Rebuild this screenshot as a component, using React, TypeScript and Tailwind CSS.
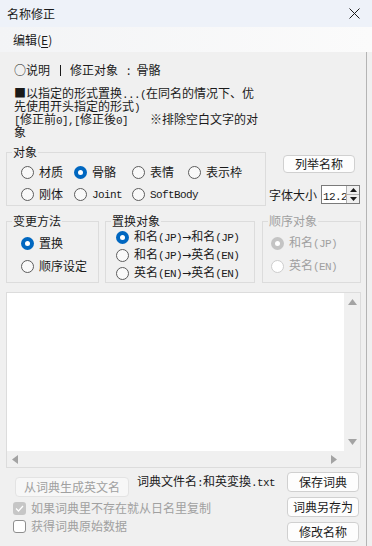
import type { ReactNode } from "react";

function M({ children }: { children: ReactNode }) {
  return <span className="font-['Liberation_Mono','Noto_Sans_CJK_SC',monospace] text-[11px] tracking-[-0.6px]">{children}</span>;
}

// arrow between names, Liberation Mono draws it too short
function To() {
  return <span className="font-['DejaVu_Sans',sans-serif] text-[11px]">→</span>;
}

function Radio({ checked, disabled }: { checked?: boolean; disabled?: boolean }) {
  if (checked) {
    return (
      <span
        className={`flex h-[13px] w-[13px] shrink-0 items-center justify-center rounded-full ${
          disabled ? "bg-[#c4c4c4]" : "bg-[#0067c0]"
        }`}
      >
        <span className="h-[5px] w-[5px] rounded-full bg-white" />
      </span>
    );
  }
  return (
    <span
      className={`h-[13px] w-[13px] shrink-0 rounded-full border ${
        disabled ? "border-[#cdcdcd] bg-white" : "border-[#5c5c5c] bg-[#f9f9f9]"
      }`}
    />
  );
}

function RadioItem({ label, checked, disabled }: { label: ReactNode; checked?: boolean; disabled?: boolean }) {
  return (
    <div className={`flex h-[16px] items-center gap-[5px] whitespace-nowrap ${disabled ? "text-[#a0a0a0]" : ""}`}>
      <Radio checked={checked} disabled={disabled} />
      <span>{label}</span>
    </div>
  );
}

function Arrow({ dir }: { dir: "up" | "down" | "left" | "right" }) {
  const d = {
    up: "M4.5 0L9 6H0Z",
    down: "M0 0H9L4.5 6Z",
    left: "M6 0V9L0 4.5Z",
    right: "M0 0L6 4.5L0 9Z",
  }[dir];
  const vertical = dir === "up" || dir === "down";
  return (
    <svg width={vertical ? 9 : 6} height={vertical ? 6 : 9} viewBox={vertical ? "0 0 9 6" : "0 0 6 9"}>
      <path d={d} fill="#a3a3a3" />
    </svg>
  );
}

const btn =
  "flex h-[20px] w-[72px] items-center justify-center rounded-[4px] border border-[#d0d0d0] bg-[#fdfdfd] text-[12px] text-[#1a1a1a]";

export default function App() {
  return (
    <div className="flex h-[546px] w-[372px] flex-col overflow-hidden bg-[#f0f0f0] font-['Noto_Sans_CJK_SC',sans-serif] text-[12px] leading-[16px] text-[#1a1a1a]">
      <div className="flex h-[27px] shrink-0 items-center justify-between bg-[#eef2f9] pl-[7px] pr-[12px]">
        <span>名称修正</span>
        <svg width="11" height="11" viewBox="0 0 11 11">
          <path d="M0.5 0.5L10.5 10.5M10.5 0.5L0.5 10.5" stroke="#1a1a1a" strokeWidth="1" />
        </svg>
      </div>
      <div className="flex h-[25px] shrink-0 items-center bg-gradient-to-r from-[#f3f4f6] to-[#fbfbfb] pl-[13px]">
        <span>
          编辑(<span className="underline underline-offset-2">E</span>)
        </span>
      </div>

      <div className="flex flex-1">
        <div className="w-[366px]">
          <div className="mt-[10px] flex items-center whitespace-nowrap pl-[14px]">
            <span>○说明</span>
            <span className="ml-[10px] h-[11px] w-px bg-[#1a1a1a]" />
            <span className="ml-[9px]">修正对象</span>
            <span className="ml-[9px]">:</span>
            <span className="ml-[6px]">骨骼</span>
          </div>

          <div className="mt-[8px] whitespace-nowrap pl-[14px] leading-[13px]">
            <div className="h-[13px]">
              ■以指定的形式置换<M>...(</M>在同名的情况下、优
            </div>
            <div className="h-[13px]">
              先使用开头指定的形式<M>)</M>
            </div>
            <div className="h-[13px]">
              <M>[</M>修正前<M>0],[</M>修正後<M>0]</M>
              <span className="ml-[22px]">※排除空白文字的对</span>
            </div>
            <div className="h-[13px]">象</div>
          </div>

          <div className="mt-[7px] flex">
            <fieldset className="ml-[6px] w-[260px] border border-[#dcdcdc] pb-[3px]">
              <legend className="ml-[5px] px-px leading-[14px]">对象</legend>
              <div className="grid grid-cols-[53px_58px_56px_auto] gap-y-[6px] pl-[14px] pt-[5px]">
                <RadioItem label="材质" />
                <RadioItem label="骨骼" checked />
                <RadioItem label="表情" />
                <RadioItem label="表示枠" />
                <RadioItem label="刚体" />
                <RadioItem label={<M>Joint</M>} />
                <RadioItem label={<M>SoftBody</M>} />
              </div>
            </fieldset>
            <div className="flex flex-1 flex-col pl-[3px]">
              <button type="button" className="ml-[14px] mt-[10px] flex h-[18px] w-[72px] items-center justify-center rounded-[4px] border border-[#d0d0d0] bg-[#fdfdfd]">
                列举名称
              </button>
              <div className="mt-[12px] flex items-center gap-[4px]">
                <span>字体大小</span>
                <div className="flex h-[19px] w-[39px] border border-[#7a7a7a] bg-white">
                  <div className="w-[24px] overflow-hidden whitespace-nowrap pl-[1px] leading-[17px]">
                    <M>12.2</M>
                  </div>
                  <div className="flex w-[13px] flex-col border-l border-[#b0b0b0] bg-[#f0f0f0]">
                    <div className="flex flex-1 items-center justify-center border-b border-[#b0b0b0]">
                      <svg width="7" height="4" viewBox="0 0 7 4">
                        <path d="M3.5 0L7 4H0Z" fill="#1a1a1a" />
                      </svg>
                    </div>
                    <div className="flex flex-1 items-center justify-center">
                      <svg width="7" height="4" viewBox="0 0 7 4">
                        <path d="M0 0H7L3.5 4Z" fill="#1a1a1a" />
                      </svg>
                    </div>
                  </div>
                </div>
              </div>
            </div>
          </div>

          <div className="mt-[8px] flex items-stretch">
            <fieldset className="ml-[6px] w-[93px] border border-[#dcdcdc]">
              <legend className="ml-[5px] px-px leading-[14px]">变更方法</legend>
              <div className="flex flex-col gap-[7px] pl-[14px] pt-[7px]">
                <RadioItem label="置换" checked />
                <RadioItem label="顺序设定" />
              </div>
            </fieldset>
            <fieldset className="ml-[6px] w-[150px] border border-[#dcdcdc]">
              <legend className="ml-[5px] px-px leading-[14px]">置换对象</legend>
              <div className="flex flex-col gap-[2px] pb-[1px] pl-[10px] pt-[1px]">
                <RadioItem checked label={<>和名<M>(JP)</M><To />和名<M>(JP)</M></>} />
                <RadioItem label={<>和名<M>(JP)</M><To />英名<M>(EN)</M></>} />
                <RadioItem label={<>英名<M>(EN)</M><To />英名<M>(EN)</M></>} />
              </div>
            </fieldset>
            <fieldset className="ml-[7px] w-[99px] border border-[#dcdcdc]">
              <legend className="ml-[5px] px-px leading-[14px] text-[#a0a0a0]">顺序对象</legend>
              <div className="flex flex-col gap-[7px] pb-[8px] pl-[8px] pt-[7px]">
                <RadioItem checked disabled label={<>和名<M>(JP)</M></>} />
                <RadioItem disabled label={<>英名<M>(EN)</M></>} />
              </div>
            </fieldset>
          </div>

          <div className="ml-[6px] mt-[9px] flex h-[176px] w-[355px] flex-col border border-[#dcdcdc]">
            <div className="flex h-[158px]">
              <div className="flex-1 bg-white" />
              <div className="flex w-[16px] flex-col items-center justify-between bg-[#f0f0f0] pb-[6px] pt-[6px]">
                <Arrow dir="up" />
                <Arrow dir="down" />
              </div>
            </div>
            <div className="flex h-[16px]">
              <div className="flex flex-1 items-center justify-between bg-[#f0f0f0] pl-[5px] pr-[7px]">
                <Arrow dir="left" />
                <Arrow dir="right" />
              </div>
              <div className="w-[16px] bg-[#f0f0f0]" />
            </div>
          </div>

          <div className="flex pr-[7px]">
            <div className="flex flex-1 flex-col pl-[13px]">
              <div className="flex items-start">
                <button type="button" className="ml-[2px] mt-[9px] flex h-[20px] w-[114px] items-center justify-center rounded-[4px] border border-[#e3e3e3] bg-[#f7f7f7] text-[#a0a0a0]">
                  从词典生成英文名
                </button>
                <span className="ml-[8px] mt-[5px] whitespace-nowrap">
                  词典文件名<M>:</M>和英変換<M>.txt</M>
                </span>
              </div>
              <div className="mt-[3px] flex h-[16px] items-center gap-[5px] text-[#a0a0a0]">
                <span className="flex h-[13px] w-[13px] items-center justify-center rounded-[3px] bg-[#c6c6c6]">
                  <svg width="9" height="7" viewBox="0 0 9 7">
                    <path d="M1 3.5L3.5 6L8 1" stroke="white" strokeWidth="1.3" fill="none" />
                  </svg>
                </span>
                <span>如果词典里不存在就从日名里复制</span>
              </div>
              <div className="mt-[2px] flex h-[16px] items-center gap-[5px] text-[#a0a0a0]">
                <span className="h-[13px] w-[13px] rounded-[3px] border border-[#8e8e8e] bg-white" />
                <span>获得词典原始数据</span>
              </div>
            </div>
            <div className="flex flex-col gap-[5px] pt-[4px]">
              <button type="button" className={btn}>保存词典</button>
              <button type="button" className={btn}>词典另存为</button>
              <button type="button" className={btn}>修改名称</button>
            </div>
          </div>
        </div>
        <div className="w-px bg-[#b4b4b4]" />
        <div className="flex-1" />
      </div>
    </div>
  );
}
